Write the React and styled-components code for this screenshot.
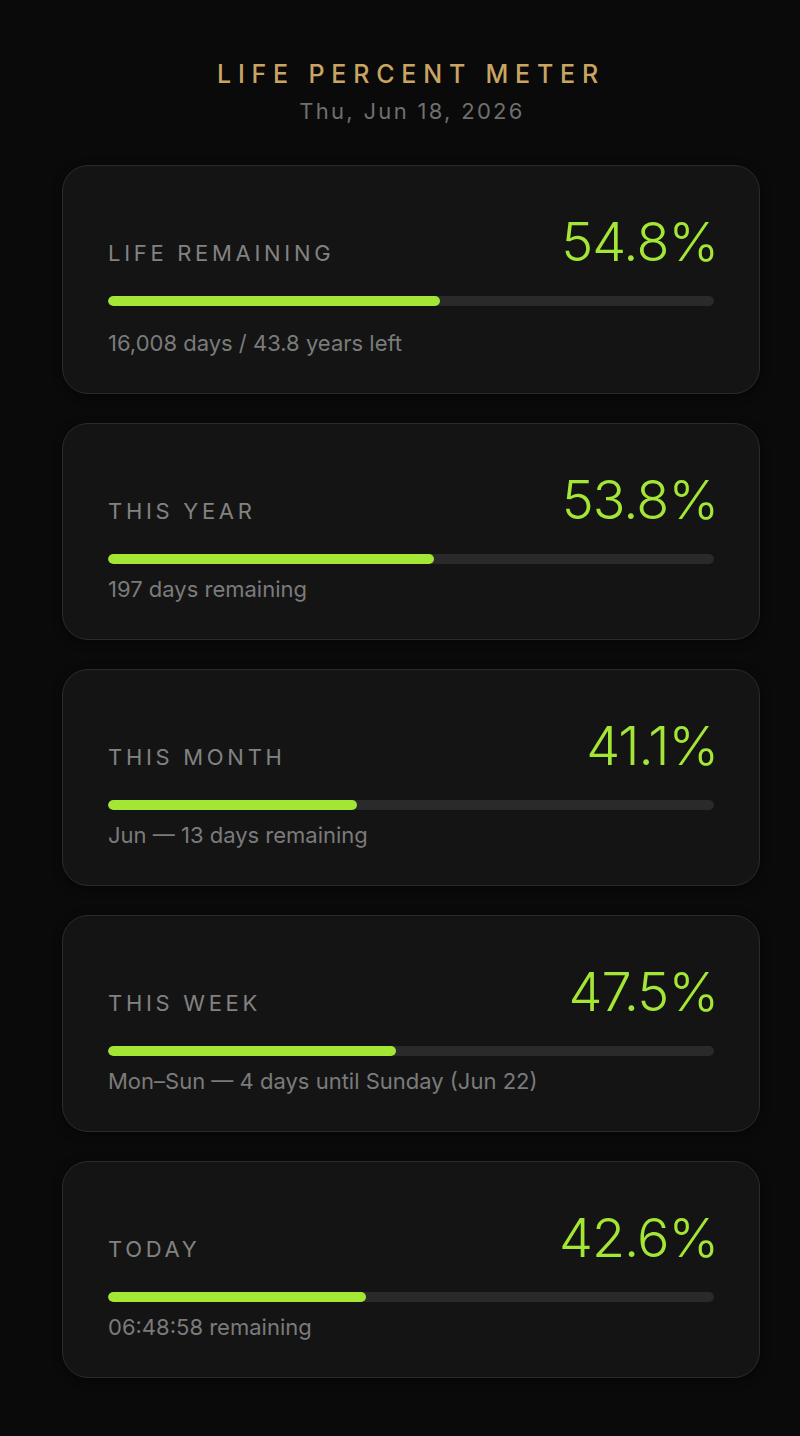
import React from 'react';
import styled, { createGlobalStyle } from 'styled-components';

const Global = createGlobalStyle`
  html, body {
    margin: 0;
    background: #0a0a0a;
  }
  body {
    font-family: Inter, "Noto Sans", sans-serif;
  }
`;

const Page = styled.div`
  min-height: 1436px;
  box-sizing: border-box;
  padding: 59px 40px 40px 62px;
`;

const Header = styled.header`
  display: flex;
  flex-direction: column;
  align-items: center;
  gap: 8px;
  margin-bottom: 39px;
`;

const Title = styled.h1`
  margin: 0;
  font-size: 25px;
  font-weight: 500;
  letter-spacing: 6.8px;
  color: #c9a463;
  line-height: 1.2;
`;

const DateLine = styled.div`
  font-size: 22px;
  letter-spacing: 2.3px;
  color: #6f6f6f;
  line-height: 1.3;
  padding-left: 2px;
`;

const List = styled.div`
  display: flex;
  flex-direction: column;
  gap: 29px;
`;

const Card = styled.section`
  background: #141414;
  border: 1px solid #2b2b2b;
  border-radius: 26px;
  padding: 49px 45px 35px;
  box-shadow: 0 2px 10px rgba(0, 0, 0, 0.5);
`;

const Row = styled.div`
  display: flex;
  justify-content: space-between;
  align-items: baseline;
`;

const Label = styled.div`
  font-size: 22px;
  letter-spacing: 3.7px;
  color: #828282;
  text-transform: uppercase;
`;

const Percent = styled.div`
  font-size: 54px;
  font-weight: 300;
  line-height: 1;
  color: #a3e635;
  letter-spacing: -1px;
  margin-right: -4px;
`;

const Track = styled.div`
  margin-top: 27px;
  height: 10px;
  border-radius: 5px;
  background: #2a2a2a;
  overflow: hidden;
`;

const Fill = styled.div`
  height: 100%;
  border-radius: 5px;
  background: #a3e635;
`;

const Sub = styled.div`
  margin-top: ${(p) => (p.$wide ? '22px' : '10px')};
  font-size: 22px;
  line-height: 30px;
  color: #7b7b7b;
`;

const meters = [
  { label: 'Life remaining', pct: 54.8, sub: '16,008 days / 43.8 years left', wide: true },
  { label: 'This year', pct: 53.8, sub: '197 days remaining' },
  { label: 'This month', pct: 41.1, sub: 'Jun — 13 days remaining' },
  { label: 'This week', pct: 47.5, sub: 'Mon–Sun — 4 days until Sunday (Jun 22)' },
  { label: 'Today', pct: 42.6, sub: '06:48:58 remaining' },
];

const Meter = ({ label, pct, sub, wide }) => (
  <Card>
    <Row>
      <Label>{label}</Label>
      <Percent>{pct.toFixed(1)}%</Percent>
    </Row>
    <Track>
      <Fill style={{ width: pct + '%' }} />
    </Track>
    <Sub $wide={wide}>{sub}</Sub>
  </Card>
);

export default function App() {
  return (
    <Page>
      <Global />
      <Header>
        <Title>LIFE PERCENT METER</Title>
        <DateLine>Thu, Jun 18, 2026</DateLine>
      </Header>
      <List>
        {meters.map((m) => (
          <Meter key={m.label} {...m} />
        ))}
      </List>
    </Page>
  );
}
